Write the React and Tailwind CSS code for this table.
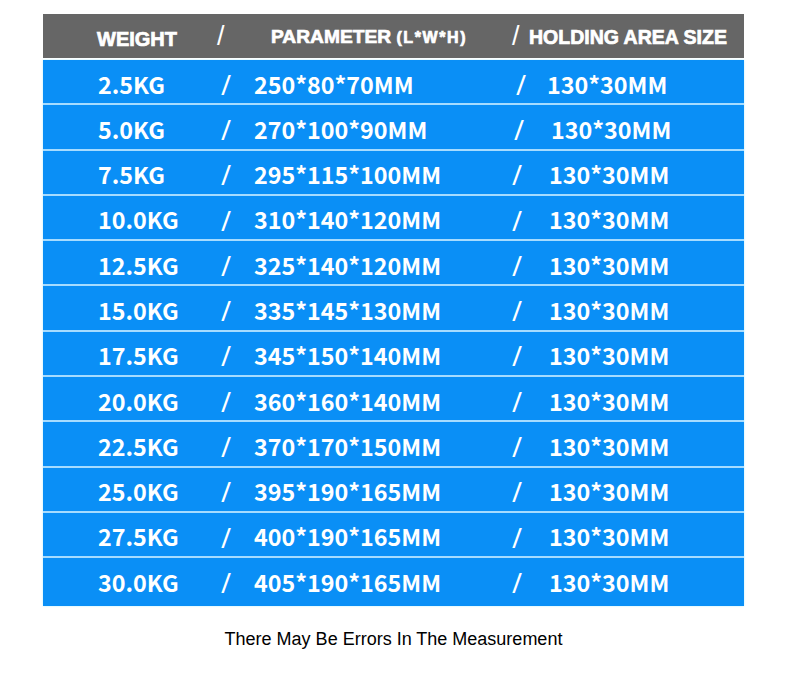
import React from "react";

const rows = [
  ["2.5KG", "250*80*70MM", "w-[262px]", "w-[31px]"],
  ["5.0KG", "270*100*90MM", "w-[260px]", "w-[37px]"],
  ["7.5KG", "295*115*100MM", "w-[258px]", "w-[37px]"],
  ["10.0KG", "310*140*120MM", "w-[258px]", "w-[37px]"],
  ["12.5KG", "325*140*120MM", "w-[258px]", "w-[37px]"],
  ["15.0KG", "335*145*130MM", "w-[258px]", "w-[37px]"],
  ["17.5KG", "345*150*140MM", "w-[258px]", "w-[37px]"],
  ["20.0KG", "360*160*140MM", "w-[258px]", "w-[37px]"],
  ["22.5KG", "370*170*150MM", "w-[258px]", "w-[37px]"],
  ["25.0KG", "395*190*165MM", "w-[258px]", "w-[37px]"],
  ["27.5KG", "400*190*165MM", "w-[258px]", "w-[37px]"],
  ["30.0KG", "405*190*165MM", "w-[258px]", "w-[37px]"],
];

const cell = "font-['Noto_Sans_CJK_SC','Noto_Sans',sans-serif] font-bold text-[23.3px] leading-none text-white whitespace-nowrap";
const slash = "font-['Noto_Sans','DejaVu_Sans',sans-serif] font-normal text-[27px] leading-none text-white";

export default function App() {
  return (
    <div className="w-[790px] h-[692px] bg-white pt-[14px] pl-[43px]">
      <div className="w-[701px] flex flex-col gap-[2px]">
        <div className="h-[44px] bg-[#666666] flex items-center pl-[54px] text-white font-['Liberation_Sans',Arial,sans-serif] font-bold [-webkit-text-stroke:0.7px_white]">
          <span className="w-[120px] text-[20px] pt-[6px]">WEIGHT</span>
          <span className="w-[54px] text-[27px] font-normal [-webkit-text-stroke:0px]">/</span>
          <span className="w-[241px] text-[19.2px] pt-[3px] whitespace-nowrap">
            PARAMETER <span className="text-[16px] tracking-[1.6px]">(L*W*H)</span>
          </span>
          <span className="w-[17px] text-[27px] font-normal [-webkit-text-stroke:0px]">/</span>
          <span className="text-[19.5px] pt-[3px] whitespace-nowrap">HOLDING AREA SIZE</span>
        </div>
        <div className="flex flex-col gap-[2px] bg-[#a6dcff] shadow-[0_0_2px_#b8f0ff]">
          {rows.map(([w, p, pw, hw], i) => (
            <div
              key={i}
              className={`${i === rows.length - 1 ? "h-[47.7px] pb-[4.4px]" : "h-[43.3px]"} bg-[#0a8ff6] flex items-center pl-[55px] pt-[5px]`}
            >
              <span className={`${cell} w-[123px]`}>{w}</span>
              <span className={`${slash} w-[33px]`}>/</span>
              <span className={`${cell} ${pw}`}>{p}</span>
              <span className={`${slash} ${hw}`}>/</span>
              <span className={cell}>130*30MM</span>
            </div>
          ))}
        </div>
      </div>
      <div className="w-[701px] mt-[20px] text-center text-[18px] text-black font-['Liberation_Sans',Arial,sans-serif]">
        There May Be Errors In The Measurement
      </div>
    </div>
  );
}
